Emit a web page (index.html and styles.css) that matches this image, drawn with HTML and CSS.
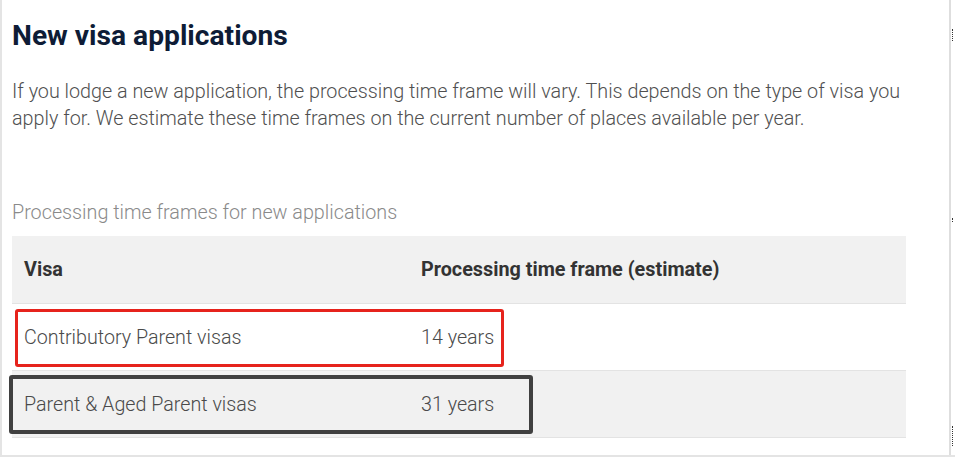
FILE: index.html
```html
<!DOCTYPE html>
<html>
<head>
<meta charset="utf-8">
<link rel="stylesheet" href="styles.css">
</head>
<body>
<div class="frame">
  <main class="content">
    <h2 class="title">New visa applications</h2>
    <p class="intro">If you lodge a new application, the processing time frame will vary. This depends on the type of visa you apply for. We estimate these time frames on the current number of places available per year.</p>
    <table class="times">
      <caption>Processing time frames for new applications</caption>
      <thead>
        <tr><th class="c1">Visa</th><th>Processing time frame (estimate)</th></tr>
      </thead>
      <tbody>
        <tr class="r1"><td class="c1">Contributory Parent visas</td><td>14 years</td></tr>
        <tr class="r2"><td class="c1">Parent &amp; Aged Parent visas</td><td>31 years</td></tr>
      </tbody>
    </table>
    <div class="mark mark-red"></div>
    <div class="mark mark-dark"></div>
  </main>
  <div class="rail"><span class="dots d1"></span><span class="dots d2"></span><span class="dots d3"></span></div>
</div>
</body>
</html>
```

FILE: styles.css
```css
html, body {
  margin: 0;
  padding: 0;
  background: #fff;
}
.frame {
  width: 955px;
  height: 457px;
  display: flex;
  box-sizing: border-box;
  border-left: 2px solid #e4e4e4;
  border-bottom: 2px solid #e4e4e4;
  overflow: hidden;
  font-family: Roboto, "Liberation Sans", sans-serif;
}
.content {
  position: relative;
  width: 949px;
  padding-left: 10px;
  box-sizing: border-box;
}
.title {
  margin: 19px 0 0 0;
  font-size: 28.2px;
  line-height: 34px;
  font-weight: 700;
  color: #0e1c36;
}
.intro {
  margin: 25px 0 0 0;
  width: 905px;
  font-size: 19.75px;
  line-height: 27px;
  font-weight: 300;
  color: #505050;
}
.times {
  margin-top: 69px;
  width: 894px;
  border-collapse: collapse;
}
.times caption {
  text-align: left;
  font-size: 19.75px;
  font-weight: 300;
  color: #8a8a8a;
  line-height: 24px;
  padding-bottom: 11px;
}
.times th, .times td {
  text-align: left;
  padding: 0 12px;
  height: 67px;
  box-sizing: border-box;
  border-bottom: 1px solid #e3e3e3;
}
.times th {
  font-size: 19.8px;
  font-weight: 700;
  color: #333;
  background: #f1f1f1;
}
.times td {
  font-size: 19.7px;
  font-weight: 300;
  color: #4a4a4a;
  padding-top: 2px;
}
.times .c1 { width: 397px; }
.r2 td { background: #f1f1f1; }
.mark {
  position: absolute;
  box-sizing: border-box;
  border-radius: 3px;
}
.mark-red {
  left: 13px;
  top: 309px;
  width: 489px;
  height: 58px;
  border: 3px solid #e6231c;
}
.mark-dark {
  left: 7px;
  top: 375px;
  width: 524px;
  height: 59px;
  border: 4px solid #404040;
}
.rail {
  position: relative;
  width: 4px;
  border-left: 2px solid #dedede;
}
.dots {
  position: absolute;
  left: 1px;
  width: 1px;
  border-left: 1px dotted #333;
}
.d1 { top: 29px; height: 12px; }
.d2 { top: 218px; height: 4px; }
.d3 { top: 426px; height: 20px; }
```
